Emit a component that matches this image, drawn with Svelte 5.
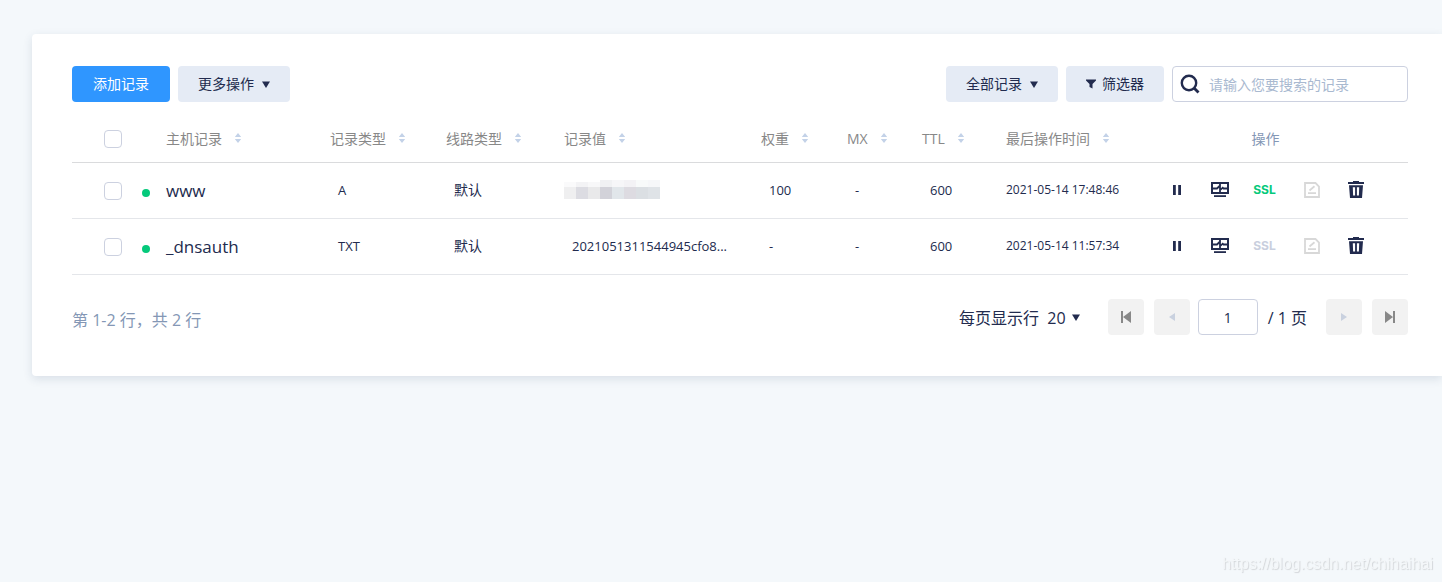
<script>
  const columns = [
    { key: 'host', label: '主机记录' },
    { key: 'type', label: '记录类型' },
    { key: 'line', label: '线路类型' },
    { key: 'value', label: '记录值' },
    { key: 'weight', label: '权重' },
    { key: 'mx', label: 'MX' },
    { key: 'ttl', label: 'TTL' },
    { key: 'time', label: '最后操作时间' },
  ];

  let records = $state([
    { host: 'www', type: 'A', line: '默认', value: null, weight: '100', mx: '-', ttl: '600', time: '2021-05-14 17:48:46', ssl: true, checked: false },
    { host: '_dnsauth', type: 'TXT', line: '默认', value: '2021051311544945cfo8...', weight: '-', mx: '-', ttl: '600', time: '2021-05-14 11:57:34', ssl: false, checked: false },
  ]);

  // masked record value, one colour per block
  const maskTop = ['#fafafb', '#f3f3f5', '#f8f8f9', '#f0f1f3', '#f6f6f8', '#f3f2f5', '#f8fafa', '#f6f7f9'];
  const maskBottom = ['#efeff0', '#dcdce2', '#e9e9ea', '#d2d2d9', '#e1e6ea', '#dddbe1', '#dbdfe3', '#dfe3e7'];

  let keyword = $state('');
  let page = $state('1');

  let allChecked = $derived(records.every((r) => r.checked));

  function toggleAll(e) {
    records.forEach((r) => (r.checked = e.target.checked));
  }
</script>

{#snippet caret()}
  <svg class="caret" width="8" height="7" viewBox="0 0 8 7" aria-hidden="true"><path d="M0 0.5h8L4 7z" fill="currentColor" /></svg>
{/snippet}

<div class="page">
  <main class="panel">
    <div class="toolbar">
      <button class="btn primary">添加记录</button>
      <button class="btn">更多操作 {@render caret()}</button>
      <div class="spacer"></div>
      <button class="btn">全部记录 {@render caret()}</button>
      <button class="btn filter">
        <svg width="10" height="10" viewBox="0 0 10 10" aria-hidden="true"><path d="M0 0.5h10v1L6.5 5v4.5L3.5 8V5L0 1.5z" fill="currentColor" /></svg>
        筛选器
      </button>
      <label class="search">
        <svg width="20" height="20" viewBox="0 0 20 20" aria-hidden="true">
          <circle cx="9" cy="9" r="7.2" fill="none" stroke="currentColor" stroke-width="2.4" />
          <path d="M14 14l4.5 4.5" stroke="currentColor" stroke-width="2.8" />
        </svg>
        <input type="text" placeholder="请输入您要搜索的记录" aria-label="搜索记录" bind:value={keyword} />
      </label>
    </div>

    <table>
      <thead>
        <tr>
          <th class="col-check">
            <div class="check-cell">
              <input type="checkbox" aria-label="全选" checked={allChecked} onchange={toggleAll} />
            </div>
          </th>
          {#each columns as col}
            <th class="col-{col.key}">
              <span class="head">
                {col.label}
                <svg width="6" height="10" viewBox="0 0 6 10" aria-hidden="true"><path d="M3 0l3.2 4H-.2zM-.2 6h6.4L3 10z" fill="#c3d2e8" /></svg>
              </span>
            </th>
          {/each}
          <th class="col-actions">操作</th>
        </tr>
      </thead>
      <tbody>
        {#each records as r}
          <tr>
            <td class="check">
              <div class="check-cell">
                <input type="checkbox" aria-label={r.host} bind:checked={r.checked} />
                <span class="dot"></span>
              </div>
            </td>
            <td class="host">{r.host}</td>
            <td class="inset">{r.type}</td>
            <td class="inset zh">{r.line}</td>
            {#if r.value}
              <td class="inset">{r.value}</td>
            {:else}
              <td>
                <svg class="mask" width="96" height="19" viewBox="0 0 96 19" shape-rendering="crispEdges" aria-hidden="true">
                  {#each maskTop as fill, i}
                    <rect x={i * 12} y={i < 3 ? 2 : 0} width="12" height="7" {fill} />
                  {/each}
                  {#each maskBottom as fill, i}
                    <rect x={i * 12} y="7" width="12" height="12" {fill} />
                  {/each}
                </svg>
              </td>
            {/if}
            <td class="inset">{r.weight}</td>
            <td class="inset">{r.mx}</td>
            <td class="inset">{r.ttl}</td>
            <td class="time">{r.time}</td>
            <td class="col-actions">
              <div class="actions">
                <button aria-label="暂停">
                  <svg width="8" height="10" viewBox="0 0 8 10"><path d="M0 0h2.8v10H0zM5.2 0H8v10H5.2z" fill="currentColor" /></svg>
                </button>
                <button aria-label="监控">
                  <svg width="18" height="16" viewBox="0 0 18 16">
                    <path d="M1 1h16v10H1z" fill="none" stroke="currentColor" stroke-width="2" />
                    <path d="M2 6.5h4L8.6 4M9 2v9M9 8.2l3.4-3M12 6.5h4" fill="none" stroke="currentColor" stroke-width="1.8" />
                    <path d="M3 13.2h12V15H3z" fill="currentColor" />
                  </svg>
                </button>
                <button class="ssl" class:on={r.ssl}>SSL</button>
                <button class="muted" aria-label="备注">
                  <svg width="16" height="16" viewBox="0 0 16 16" fill="none" stroke="currentColor" stroke-width="1.8">
                    <path d="M1 1h10.5L15 4.5V15H1zM4 11.2h8M5.5 8.5l5-4.2" />
                  </svg>
                </button>
                <button aria-label="删除">
                  <svg width="16" height="17" viewBox="0 0 16 17" fill="currentColor">
                    <path d="M5 0h6v1h5v2H0V1h5z" />
                    <path fill-rule="evenodd" d="M1 4.2h14L14 17H2zM4.8 6.2l0.3 8.2h2V6.2zM8.9 6.2v8.2h2l0.3-8.2z" />
                  </svg>
                </button>
              </div>
            </td>
          </tr>
        {/each}
      </tbody>
    </table>

    <div class="footer">
      <span class="summary">第 1-2 行，共 2 行</span>
      <button class="page-size">每页显示行&nbsp; 20 {@render caret()}</button>
      <nav class="pager" aria-label="分页">
        <button class="step" aria-label="首页">
          <svg width="10" height="12" viewBox="0 0 10 12"><path d="M0 0h2v12H0zM10 0v12L2 6z" fill="currentColor" /></svg>
        </button>
        <button class="step" disabled aria-label="上一页">
          <svg width="6" height="8" viewBox="0 0 6 8"><path d="M6 0v8L0 4z" fill="currentColor" /></svg>
        </button>
        <span class="current">
          <input type="text" aria-label="页码" bind:value={page} />
          / 1 页
        </span>
        <button class="step" disabled aria-label="下一页">
          <svg width="6" height="8" viewBox="0 0 6 8"><path d="M0 0v8l6-4z" fill="currentColor" /></svg>
        </button>
        <button class="step" aria-label="末页">
          <svg width="10" height="12" viewBox="0 0 10 12"><path d="M8 0h2v12H8zM0 0v12l8-6z" fill="currentColor" /></svg>
        </button>
      </nav>
    </div>
  </main>
</div>

<div class="watermark">https://blog.csdn.net/chihaihai</div>

<style>
  :global(body) {
    background: #f4f8fb;
    font-family: 'Open Sans', 'Noto Sans CJK SC', sans-serif;
    color: #222b4e;
  }

  * {
    box-sizing: border-box;
  }

  button,
  input {
    font: inherit;
    color: inherit;
  }

  button {
    padding: 0;
    border: 0;
    background: none;
    cursor: pointer;
  }

  .page {
    min-height: 100vh;
    padding: 34px 0 34px 32px;
  }

  .panel {
    padding: 32px 34px 41px 40px;
    background: #fff;
    border-radius: 4px 0 0 4px;
    box-shadow: 0 3px 10px rgba(40, 60, 100, 0.13);
  }

  /* toolbar */
  .toolbar {
    display: flex;
    gap: 8px;
    font-size: 14px;
  }

  .spacer {
    flex: 1;
  }

  .btn {
    display: flex;
    align-items: center;
    gap: 8px;
    height: 36px;
    padding: 0 20px 2px;
    border-radius: 4px;
    background: #e5ebf5;
  }

  .btn svg {
    margin-top: 2px;
  }

  .btn.primary {
    padding: 0 21px 2px;
    background: #2f96ff;
    color: #fff;
  }

  .btn.filter {
    gap: 6px;
  }

  .search {
    display: flex;
    align-items: center;
    gap: 9px;
    width: 236px;
    height: 36px;
    padding: 0 7px;
    border: 1px solid #ccd1e0;
    border-radius: 4px;
  }

  .search svg {
    flex: none;
  }

  .search input {
    flex: 1;
    min-width: 0;
    padding: 0;
    border: 0;
    outline: none;
    background: none;
  }

  .search input::placeholder {
    color: #a9b9d0;
  }

  /* records table */
  table {
    width: 100%;
    margin-top: 14px;
    table-layout: fixed;
    border-collapse: separate;
    border-spacing: 0;
    font-size: 13px;
  }

  th,
  td {
    padding: 0 0 2px;
    text-align: left;
    white-space: nowrap;
    border-bottom: 1px solid #e4e6ea;
  }

  th {
    height: 47px;
    border-bottom-color: #dadbdd;
    font-size: 14px;
    font-weight: 400;
    color: #888;
  }

  td {
    height: 56px;
  }

  th.col-check {
    padding: 0;
  }

  td.check {
    padding: 1px 0 0;
  }

  .col-check { width: 94px; }
  .col-host { width: 164px; }
  .col-type { width: 116px; }
  .col-line { width: 118px; }
  .col-weight { width: 86px; }
  .col-mx { width: 75px; }
  .col-ttl { width: 84px; }
  .col-time { width: 149px; }

  .col-actions {
    width: 253px;
    padding-right: 32px;
  }

  th.col-actions {
    text-align: center;
    color: #8497b5;
  }

  .head {
    display: flex;
    align-items: center;
    gap: 13px;
  }

  .check-cell {
    display: flex;
    align-items: center;
    gap: 20px;
    padding-left: 32px;
  }

  input[type='checkbox'] {
    appearance: none;
    width: 18px;
    height: 18px;
    margin: 0;
    border: 1px solid #ccd1e0;
    border-radius: 4px;
    background: #fff;
  }

  input[type='checkbox']:checked {
    background: #2f96ff;
    border-color: #2f96ff;
  }

  .dot {
    width: 8px;
    height: 8px;
    margin-top: 4px;
    border-radius: 50%;
    background: #05c97b;
  }

  td.inset {
    padding-left: 8px;
  }

  td.zh {
    padding-bottom: 4px;
    font-size: 14px;
  }

  td.host {
    padding-bottom: 0;
    font-size: 17px;
  }

  td.time {
    font-size: 12px;
  }

  .mask {
    display: block;
  }

  .actions {
    display: grid;
    grid-template-columns: 43px 43px 47px 47px 41px;
    justify-items: center;
    align-items: center;
  }

  .actions button {
    display: flex;
    align-items: center;
    justify-content: center;
    height: 24px;
  }

  .actions .ssl {
    font-family: Inter, sans-serif;
    font-size: 12px;
    font-weight: 700;
    color: #c9cfde;
  }

  .actions .ssl.on {
    color: #05c97b;
  }

  .actions .muted {
    color: #d8d8d8;
  }

  /* footer */
  .footer {
    display: flex;
    align-items: center;
    margin-top: 24px;
    font-size: 16px;
  }

  .summary {
    flex: 1;
    padding-top: 4px;
    color: #8497b5;
  }

  .page-size {
    display: flex;
    align-items: center;
    gap: 6px;
    margin-right: 28px;
  }

  .pager {
    display: flex;
    align-items: center;
    gap: 10px;
  }

  .step {
    display: flex;
    align-items: center;
    justify-content: center;
    width: 36px;
    height: 36px;
    border-radius: 4px;
    background: #f2f2f2;
    color: #888;
  }

  .step:disabled {
    color: #c9d1df;
    cursor: default;
  }

  .current {
    display: flex;
    align-items: center;
    gap: 10px;
    padding-right: 9px;
    white-space: nowrap;
  }

  .current input {
    width: 60px;
    height: 36px;
    margin-left: -2px;
    padding: 0;
    border: 1px solid #ccd1e0;
    border-radius: 4px;
    background: #fff;
    font-size: 14px;
    text-align: center;
  }

  .watermark {
    position: fixed;
    right: 9px;
    bottom: 8px;
    font: 16px/20px 'Liberation Sans', sans-serif;
    color: #f4f7f9;
    text-shadow: 1px 1px 1px #d3d6d9;
    pointer-events: none;
  }
</style>
